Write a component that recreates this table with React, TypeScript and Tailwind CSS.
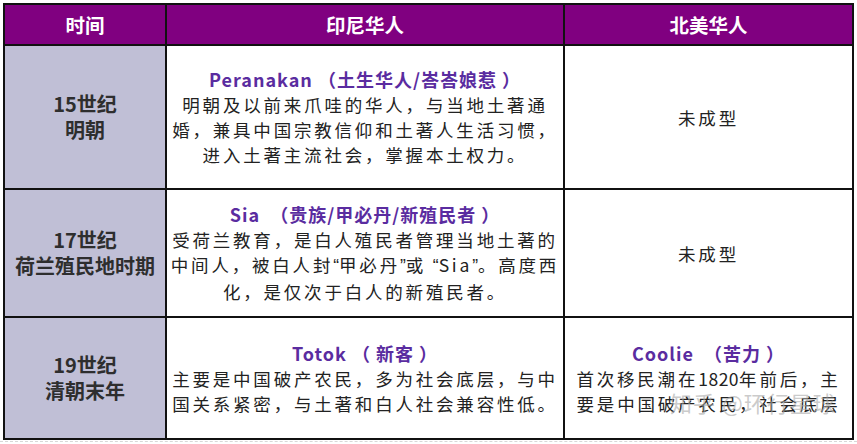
const font = { fontFamily: '"Noto Sans CJK SC", "Noto Sans", sans-serif' };

function Q({ children }: { children: string }) {
  // narrow curly quotes like the original sheet's font
  return <span style={{ fontFamily: '"Liberation Sans", sans-serif', letterSpacing: 0 }}>{children}</span>;
}

type Row = {
  era: string[];
  title: string;
  body: React.ReactNode[];
  na?: React.ReactNode[];
  naTitle?: string;
};

const rows: Row[] = [
  {
    era: ['15世纪', '明朝'],
    title: 'Peranakan （土生华人/峇峇娘惹 ）',
    body: ['明朝及以前来爪哇的华人，与当地土著通', '婚，兼具中国宗教信仰和土著人生活习惯，', '进入土著主流社会，掌握本土权力。'],
    na: ['未成型'],
  },
  {
    era: ['17世纪', '荷兰殖民地时期'],
    title: 'Sia  （贵族/甲必丹/新殖民者 ）',
    body: [
      '受荷兰教育，是白人殖民者管理当地土著的',
      <>中间人，被白人封<Q>“</Q>甲必丹<Q>”</Q>或 <Q>“</Q>Sia<Q>”</Q>。高度西</>,
      '化，是仅次于白人的新殖民者。',
    ],
    na: ['未成型'],
  },
  {
    era: ['19世纪', '清朝末年'],
    title: 'Totok （ 新客 ）',
    body: ['主要是中国破产农民，多为社会底层，与中', '国关系紧密，与土著和白人社会兼容性低。'],
    naTitle: 'Coolie  （苦力 ）',
    na: [
      <>首次移民潮在<span className="tracking-[0.5px]">1820</span>年前后，主</>,
      '要是中国破产农民，社会底层',
    ],
  },
];

const heights = ['h-[144px]', 'h-[128px]', 'h-[122px]'];

export default function App() {
  return (
    <div className="relative w-[857px] h-[444px] bg-white overflow-hidden pt-[3px] pl-[3px]" style={font}>
      <table className="table-fixed border-collapse w-[849px]">
        <colgroup>
          <col className="w-[162px]" />
          <col className="w-[398px]" />
          <col className="w-[289px]" />
        </colgroup>
        <thead>
          <tr className="h-[41px] bg-[#800080] text-white text-[19.5px] font-bold">
            <th className="border-2 border-[#111]">时间</th>
            <th className="border-2 border-[#111]">印尼华人</th>
            <th className="border-2 border-[#111]">北美华人</th>
          </tr>
        </thead>
        <tbody>
          {rows.map((r, i) => (
            <tr key={i} className={heights[i]}>
              <td className="border-2 border-[#111] bg-[#c0bfd6] text-center text-[20px] font-bold leading-[26px] text-[#2e2e2e]">
                {r.era.map((e) => (
                  <div key={e} className="whitespace-nowrap">{e}</div>
                ))}
              </td>
              <td className="border-2 border-[#111] text-center leading-[25px]">
                <div className="text-[18px] font-bold tracking-[1px] text-[#5a2ca0] whitespace-pre">{r.title}</div>
                {r.body.map((b, j) => (
                  <div key={j} className="text-[17.5px] tracking-[2.8px] text-[#222] whitespace-nowrap">{b}</div>
                ))}
              </td>
              <td className="border-2 border-[#111] text-center leading-[25px]">
                {r.naTitle && (
                  <div className="text-[18px] font-bold tracking-[1px] text-[#5a2ca0] whitespace-pre">{r.naTitle}</div>
                )}
                {r.na?.map((b, j) => (
                  <div key={j} className="text-[17.5px] tracking-[2.8px] text-[#222] whitespace-nowrap">{b}</div>
                ))}
              </td>
            </tr>
          ))}
        </tbody>
      </table>
      <div className="absolute left-[670px] top-[386px] text-[22px] text-[#a8a8a8]/60 tracking-[1px] whitespace-nowrap pointer-events-none">
        知乎 @环行星球
      </div>
      <div className="absolute left-0 right-0 top-[441px] border-t border-dashed border-[#d8d8d8]" />
    </div>
  );
}
